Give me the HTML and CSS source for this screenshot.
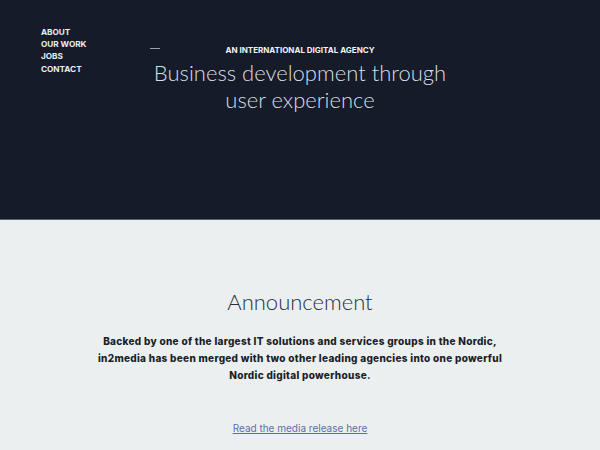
FILE: index.html
```html
<!DOCTYPE html>
<html lang="en">

<head>
    <meta charset="UTF-8">
    <meta name="viewport" content="width=device-width, initial-scale=1.0">
    <title>in2media</title>
    <link rel="stylesheet" href="styles.css">
</head>

<body>

    <header class="hero">
        <nav class="menu">
            <a href="#">About</a>
            <a href="#">Our work</a>
            <a href="#">Jobs</a>
            <a href="#">Contact</a>
        </nav>

        <div class="intro">
            <div class="tagline">
                <span class="dash"></span>
                <p>An international digital agency</p>
            </div>
            <h1>Business development through user experience</h1>
        </div>
    </header>

    <section class="announcement">
        <h2>Announcement</h2>
        <p>Backed by one of the largest IT solutions and services groups in the Nordic,
            in2media has been merged with two other leading agencies into one powerful
            Nordic digital powerhouse.</p>
        <a href="#">Read the media release here</a>
    </section>

</body>

</html>
```

FILE: styles.css
```css
body {
    margin: 0;
    font-family: Inter, 'Liberation Sans', sans-serif;
    background: #ebeff0;
}

.hero {
    display: grid;
    grid-template-columns: 1fr 300px 1fr;
    height: 219px;
    background: #151b28;
    border-bottom: 1px solid #5a6270;
    color: #e6e8eb;
}

.menu {
    display: flex;
    flex-direction: column;
    padding: 26px 0 0 41px;

    a {
        color: #eceef1;
        text-decoration: none;
        text-transform: uppercase;
        font-size: 8.2px;
        font-weight: 700;
        line-height: 12.2px;
    }
}

.intro {
    padding-top: 44px;
    text-align: center;

    h1 {
        margin: 3px -10px 0;
        font-family: Lato, Inter, sans-serif;
        font-size: 22px;
        font-weight: 300;
        line-height: 27px;
        color: #d9dde3;
    }
}

.tagline {
    display: grid;
    grid-template-columns: 10px 1fr 10px;
    align-items: center;

    .dash {
        height: 1px;
        background: #9aa0aa;
        margin-top: -3px;
    }

    p {
        margin: 0;
        font-size: 8px;
        font-weight: 700;
        text-transform: uppercase;
        color: #f2f3f5;
        line-height: 12px;
    }
}

.announcement {
    text-align: center;
    padding: 68px 90px 0;

    h2 {
        margin: 0 0 17px;
        font-family: Lato, Inter, sans-serif;
        font-size: 22px;
        font-weight: 300;
        color: #2a2f38;
        line-height: 28px;
    }

    p {
        margin: 0 0 32px;
        font-size: 10px;
        font-weight: 800;
        line-height: 17px;
        color: #1a1e26;
        letter-spacing: 0.3px;
    }

    a {
        font-size: 10px;
        color: #5b6fa6;
    }
}
```
